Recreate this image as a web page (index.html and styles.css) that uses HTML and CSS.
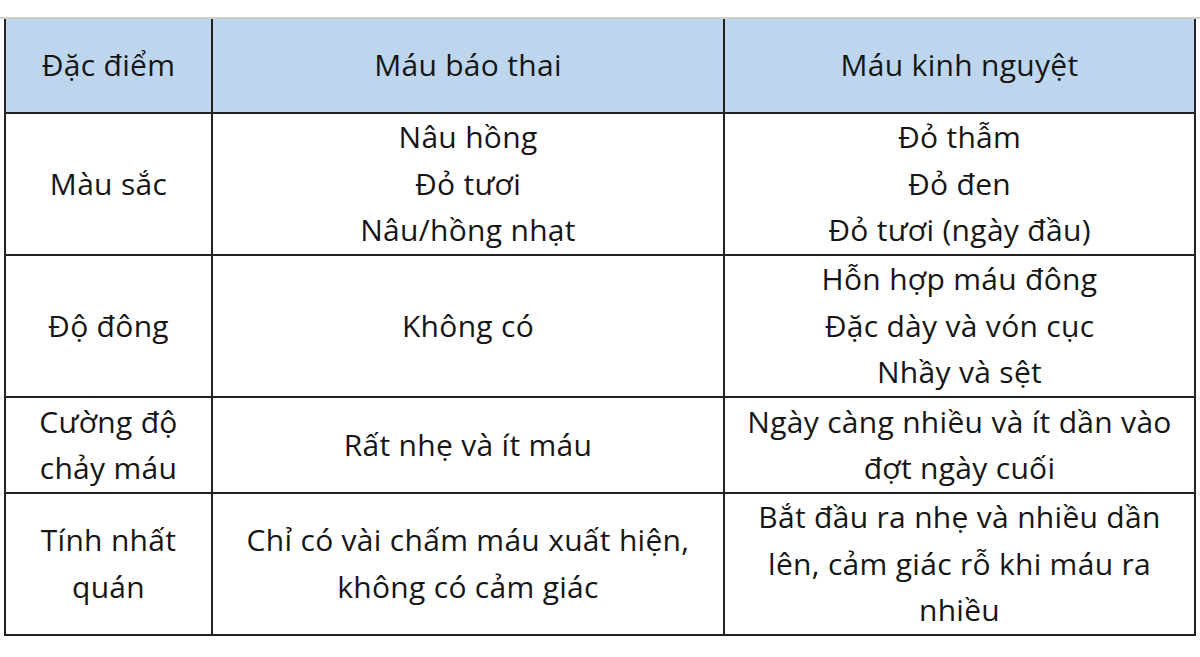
FILE: index.html
```html
<!DOCTYPE html>
<html lang="vi">
<head>
<meta charset="utf-8">
<title>Máu báo thai và máu kinh nguyệt</title>
<link rel="stylesheet" href="styles.css">
</head>
<body>
<div class="sheet">
  <table class="compare">
    <colgroup>
      <col class="c1">
      <col class="c2">
      <col class="c3">
    </colgroup>
    <thead>
      <tr class="r-head">
        <th>Đặc điểm</th>
        <th>Máu báo thai</th>
        <th>Máu kinh nguyệt</th>
      </tr>
    </thead>
    <tbody>
      <tr class="r-tall">
        <td>Màu sắc</td>
        <td>Nâu hồng<br>Đỏ tươi<br>Nâu/hồng nhạt</td>
        <td>Đỏ thẫm<br>Đỏ đen<br>Đỏ tươi (ngày đầu)</td>
      </tr>
      <tr class="r-mid">
        <td>Độ đông</td>
        <td>Không có</td>
        <td>Hỗn hợp máu đông<br>Đặc dày và vón cục<br>Nhầy và sệt</td>
      </tr>
      <tr class="r-short">
        <td>Cường độ<br>chảy máu</td>
        <td>Rất nhẹ và ít máu</td>
        <td>Ngày càng nhiều và ít dần vào<br>đợt ngày cuối</td>
      </tr>
      <tr class="r-last">
        <td>Tính nhất<br>quán</td>
        <td>Chỉ có vài chấm máu xuất hiện,<br>không có cảm giác</td>
        <td>Bắt đầu ra nhẹ và nhiều dần<br>lên, cảm giác rỗ khi máu ra<br>nhiều</td>
      </tr>
    </tbody>
  </table>
</div>
</body>
</html>
```
FILE: styles.css
```css
html, body {
  margin: 0;
  padding: 0;
  background: #ffffff;
}

body {
  font-family: "Open Sans", "Noto Sans", sans-serif;
  color: #161616;
}

.sheet {
  margin-top: 17px;
  border-top: 2px solid #cfcfcf;
  padding-left: 4px;
  height: 638px;
  box-sizing: border-box;
}

.compare {
  border-collapse: collapse;
  table-layout: fixed;
  width: 1192px;
  font-size: 30px;
  line-height: 46.5px;
  letter-spacing: 0.3px;
}

.c1 { width: 207px; }
.c2 { width: 512px; }
.c3 { width: 471px; }

.compare th,
.compare td {
  border: 2px solid #222222;
  text-align: center;
  vertical-align: middle;
  padding: 0;
  white-space: nowrap;
  font-weight: 400;
}

.compare th {
  background: #bdd6ee;
  border-top: none;
}

.r-head { height: 94px; }
.r-tall { height: 142px; }
.r-mid { height: 142px; }
.r-short { height: 96px; }
.r-last { height: 141px; }
```
